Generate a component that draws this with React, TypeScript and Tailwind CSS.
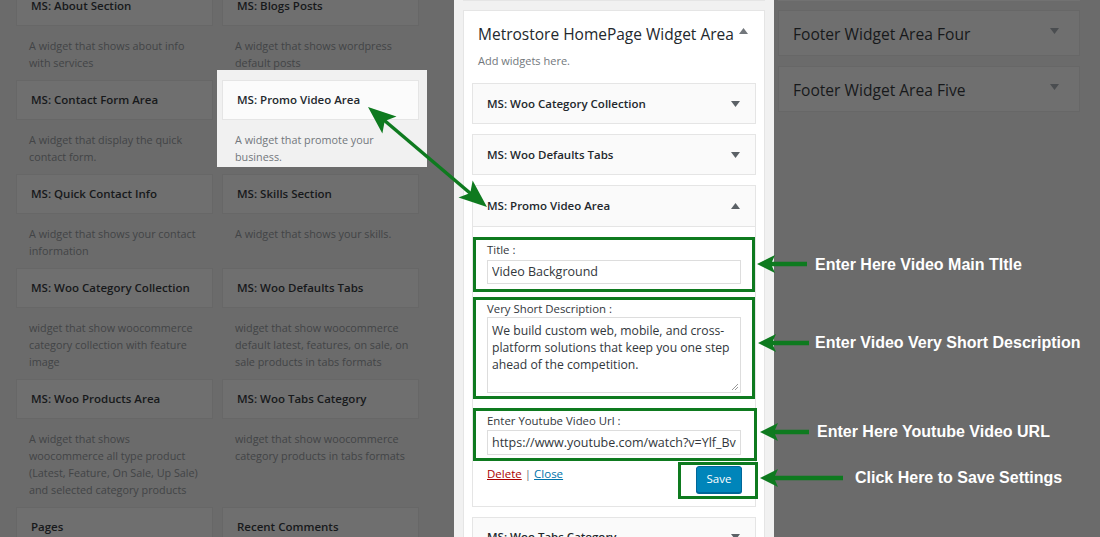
import React from "react";

type W = { title: string; lines: string[]; hl?: boolean };

const rows: [W, W][] = [
  [
    { title: "MS: About Section", lines: ["A widget that shows about info", "with services"] },
    { title: "MS: Blogs Posts", lines: ["A widget that shows wordpress", "default posts"] },
  ],
  [
    { title: "MS: Contact Form Area", lines: ["A widget that display the quick", "contact form."] },
    { title: "MS: Promo Video Area", lines: ["A widget that promote your", "business."], hl: true },
  ],
  [
    { title: "MS: Quick Contact Info", lines: ["A widget that shows your contact", "information"] },
    { title: "MS: Skills Section", lines: ["A widget that shows your skills."] },
  ],
  [
    {
      title: "MS: Woo Category Collection",
      lines: ["widget that show woocommerce", "category collection with feature", "image"],
    },
    {
      title: "MS: Woo Defaults Tabs",
      lines: ["widget that show woocommerce", "default latest, features, on sale, on", "sale products in tabs formats"],
    },
  ],
  [
    {
      title: "MS: Woo Products Area",
      lines: [
        "A widget that shows",
        "woocommerce all type product",
        "(Latest, Feature, On Sale, Up Sale)",
        "and selected category products",
      ],
    },
    {
      title: "MS: Woo Tabs Category",
      lines: ["widget that show woocommerce", "category products in tabs formats"],
    },
  ],
  [
    { title: "Pages", lines: [] },
    { title: "Recent Comments", lines: [] },
  ],
];

function DarkCell({ w }: { w: W }) {
  if (w.hl) {
    return (
      <div>
        <div className="-ml-[5px] -mr-[8px] -mt-[10px] pl-[5px] pr-[8px] pt-[10px] pb-[2px] bg-[#f1f1f1]">
          <div className="h-[40px] border border-[#e5e5e5] bg-[#fbfbfb] px-[14px] flex items-center">
            <span className="text-[11.5px] font-semibold text-[#23282d] whitespace-nowrap">{w.title}</span>
          </div>
          <div className="pt-[11px] pl-[13px] text-[10.8px] leading-[17px] text-[#72777c]">
            {w.lines.map((l, i) => (
              <div key={i} className="whitespace-nowrap">
                {l}
              </div>
            ))}
          </div>
        </div>
      </div>
    );
  }
  return (
    <div>
      <div className="h-[40px] border border-[#676767] bg-[#6f6f6f] px-[14px] flex items-center">
        <span className="text-[11.5px] font-semibold text-[#17191b] whitespace-nowrap">{w.title}</span>
      </div>
      <div className="pt-[11px] pb-[9px] pl-[13px] text-[10.8px] leading-[17px] text-[#424446]">
        {w.lines.map((l, i) => (
          <div key={i} className="whitespace-nowrap">
            {l}
          </div>
        ))}
      </div>
    </div>
  );
}

function Tri({ up, color = "#5b6166" }: { up?: boolean; color?: string }) {
  return (
    <svg width="9" height="6" viewBox="0 0 9 6" className="shrink-0">
      {up ? <path d="M0 6 L4.5 0 L9 6 Z" fill={color} /> : <path d="M0 0 L9 0 L4.5 6 Z" fill={color} />}
    </svg>
  );
}

function WidgetHeader({ title }: { title: string }) {
  return (
    <div className="h-[41px] border border-[#e5e5e5] bg-[#fafafa] pl-[14px] pr-[15px] flex items-center justify-between">
      <span className="text-[11.5px] font-semibold text-[#23282d] whitespace-nowrap">{title}</span>
      <Tri />
    </div>
  );
}

const G = "#0e7a1f";

function Head({ x, y, a, len = 18, half = 9 }: { x: number; y: number; a: number; len?: number; half?: number }) {
  return (
    <polygon
      transform={`translate(${x} ${y}) rotate(${a})`}
      points={`0,0 ${len},${-half} ${len * 0.78},0 ${len},${half}`}
      fill={G}
    />
  );
}

function HArrow({ x, y, end }: { x: number; y: number; end: number }) {
  return (
    <g>
      <line x1={x + 12} y1={y} x2={end} y2={y} stroke={G} strokeWidth={4.5} />
      <Head x={x} y={y} a={0} />
    </g>
  );
}

function Annotations() {
  const x1 = 368,
    y1 = 107,
    x2 = 487,
    y2 = 207;
  const ang = (Math.atan2(y2 - y1, x2 - x1) * 180) / Math.PI;
  const labels = [
    { t: "Enter Here Video Main TItle", x: 815, y: 265 },
    { t: "Enter Video Very Short Description", x: 815, y: 343 },
    { t: "Enter Here Youtube Video URL", x: 817, y: 432 },
    { t: "Click Here to Save Settings", x: 855, y: 478 },
  ];
  return (
    <div className="absolute inset-0 pointer-events-none">
      <svg width="1100" height="537" className="absolute left-0 top-0">
        <line x1={x1 + 10} y1={y1 + 8} x2={x2 - 10} y2={y2 - 8} stroke={G} strokeWidth={3.5} />
        <Head x={x1} y={y1} a={ang} len={28} half={11} />
        <Head x={x2} y={y2} a={ang + 180} len={28} half={11} />
        <HArrow x={757} y={264} end={807} />
        <HArrow x={758} y={343} end={809} />
        <HArrow x={760} y={432} end={809} />
        <HArrow x={760} y={478} end={843} />
      </svg>
      {labels.map((l) => (
        <div
          key={l.t}
          className="absolute font-['Liberation_Sans',Arial,sans-serif] font-bold text-[16px] leading-[18px] text-white whitespace-nowrap -translate-y-1/2"
          style={{ left: l.x, top: l.y }}
        >
          {l.t}
        </div>
      ))}
    </div>
  );
}

export default function App() {
  return (
    <div className="relative w-[1100px] h-[537px] overflow-hidden bg-[#6b6b6b] flex font-['Open_Sans',sans-serif]">
      {/* Left: available widgets */}
      <div className="w-[454px] shrink-0 pl-[16px]">
        <div className="-mt-[14px] flex flex-col">
          {rows.map((r, i) => (
            <div key={i} className="grid grid-cols-[197px_197px] gap-x-[9px]">
              <DarkCell w={r[0]} />
              <DarkCell w={r[1]} />
            </div>
          ))}
        </div>
      </div>

      {/* Center: widget area */}
      <div className="w-[320px] shrink-0 bg-[#f1f1f1] px-[9px]">
        <div className="h-[1px] bg-[#e5e5e5]" />
        <div className="mt-[9px] border border-[#e5e5e5] bg-white px-[8px] pt-[11px]">
          <div className="px-[6px] flex items-start">
            <span className="text-[15.5px] leading-[24px] text-[#23282d] whitespace-nowrap">
              Metrostore HomePage Widget Area
            </span>
            <span className="ml-[5px] mt-[6px]">
              <Tri up color="#72777c" />
            </span>
          </div>
          <div className="px-[6px] mt-[6px] text-[11px] leading-[17px] text-[#72777c]">Add widgets here.</div>
          <div className="mt-[14px] flex flex-col gap-[10px]">
            <WidgetHeader title="MS: Woo Category Collection" />
            <WidgetHeader title="MS: Woo Defaults Tabs" />
            <div className="border border-[#e5e5e5] bg-white">
              <div className="h-[41px] bg-[#fafafa] border-b border-[#e5e5e5] pl-[14px] pr-[15px] flex items-center justify-between">
                <span className="text-[11.5px] font-semibold text-[#23282d] whitespace-nowrap">MS: Promo Video Area</span>
                <Tri up />
              </div>
              <div className="pt-[10px] pb-[7px]">
                <div className="border-[3px] border-[#0e7a1f] pt-[2px] pb-[5px] px-[11px]">
                  <div className="text-[11.4px] leading-[16px] text-[#32373c]">Title :</div>
                  <input
                    readOnly
                    value="Video Background"
                    className="w-full h-[24px] border border-[#ddd] bg-white px-[4px] text-[12.5px] text-[#32373c] outline-none font-['Open_Sans',sans-serif]"
                  />
                </div>
                <div className="mt-[5px] border-[3px] border-[#0e7a1f] pt-[1px] pb-[3px] px-[11px]">
                  <div className="text-[11.4px] leading-[16px] text-[#32373c]">Very Short Description :</div>
                  <div className="relative h-[76px] border border-[#ddd] bg-white pl-[4px] pt-[4px] text-[12.2px] leading-[17px] text-[#32373c]">
                    <div className="whitespace-nowrap">We build custom web, mobile, and cross-</div>
                    <div className="whitespace-nowrap">platform solutions that keep you one step</div>
                    <div className="whitespace-nowrap">ahead of the competition.</div>
                    <svg width="7" height="7" viewBox="0 0 7 7" className="absolute right-[2px] bottom-[2px]">
                      <path d="M7 1 L1 7 M7 4 L4 7" stroke="#999" strokeWidth="1" />
                    </svg>
                  </div>
                </div>
                <div className="mt-[9px] -mr-[2px] border-[3px] border-[#0e7a1f] pt-[2px] pb-[3px] pl-[11px] pr-[13px]">
                  <div className="text-[11.4px] leading-[16px] text-[#32373c]">Enter Youtube Video Url :</div>
                  <input
                    readOnly
                    value="https://www.youtube.com/watch?v=Ylf_Bv0rBR0"
                    className="w-full h-[25px] border border-[#ddd] bg-white px-[4px] text-[12.5px] text-[#32373c] outline-none font-['Open_Sans',sans-serif]"
                  />
                </div>
                <div className="flex justify-between items-start">
                  <div className="pl-[14px] pt-[5px] text-[11.5px] leading-[16px]">
                    <span className="text-[#a00] underline">Delete</span>
                    <span className="text-[#72777c] mx-[3px]">|</span>
                    <span className="text-[#0073aa] underline">Close</span>
                  </div>
                  <div className="mt-[1px] -mr-[3px] border-[3px] border-[#0e7a1f] pt-[1px] pb-[3px] pl-[15px] pr-[13px] bg-white">
                    <div className="w-[46px] h-[27px] rounded-[3px] bg-[#0085ba] border border-[#006799] shadow-[0_1px_0_#006799] flex items-center justify-center text-white text-[11.5px]">
                      Save
                    </div>
                  </div>
                </div>
              </div>
            </div>
            <WidgetHeader title="MS: Woo Tabs Category" />
          </div>
        </div>
      </div>

      {/* Right: footer widget areas */}
      <div className="flex-1 pl-[4px] pr-[20px]">
        <div className="h-[1px] bg-[#727272]" />
        <div className="mt-[9px] flex flex-col gap-[10px]">
          {["Footer Widget Area Four", "Footer Widget Area Five"].map((t) => (
            <div
              key={t}
              className="h-[46px] border border-[#676767] bg-[#6f6f6f] pl-[14px] pr-[20px] flex items-start justify-between"
            >
              <span className="mt-[11px] text-[15.6px] leading-[24px] text-[#17191b] whitespace-nowrap">{t}</span>
              <span className="mt-[17px]">
                <Tri color="#4a4d50" />
              </span>
            </div>
          ))}
        </div>
      </div>

      <Annotations />
    </div>
  );
}
